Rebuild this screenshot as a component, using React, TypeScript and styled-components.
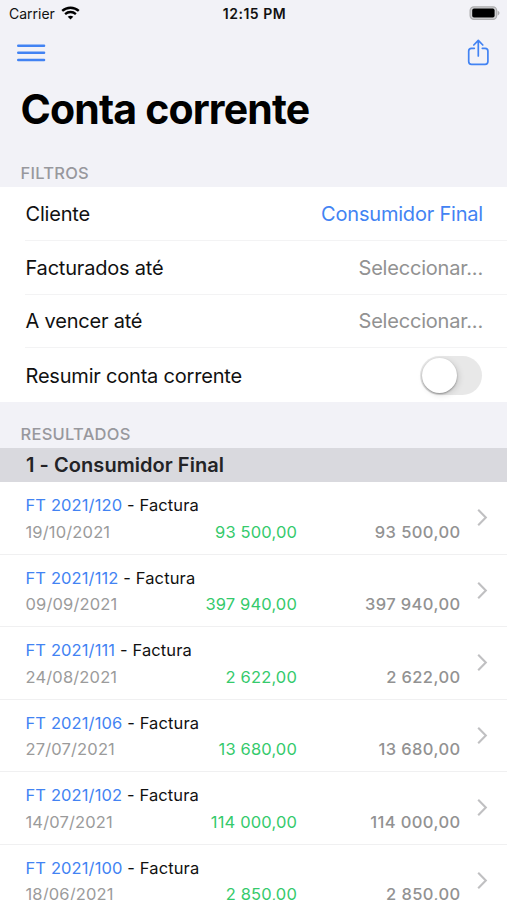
import React from 'react';
import styled, { createGlobalStyle } from 'styled-components';

const Global = createGlobalStyle`
  * { box-sizing: border-box; }
  html, body { margin: 0; padding: 0; }
  body {
    font-family: Inter, "Liberation Sans", sans-serif;
    background: #f2f2f7;
    color: #111;
    overflow: hidden;
  }
`;

const Screen = styled.div`
  width: 507px;
  height: 900px;
  overflow: hidden;
  background: #f2f2f7;
`;

const StatusBar = styled.div`
  height: 27px;
  padding: 0 7px 0 9px;
  display: grid;
  grid-template-columns: 1fr auto 1fr;
  align-items: center;
  font-size: 14px;
  line-height: 27px;
`;

const Carrier = styled.div`
  display: flex;
  align-items: center;
  gap: 6px;
`;

const WifiIcon = styled.svg`
  margin-top: -1px;
`;

const Clock = styled.div`
  font-weight: 600;
  letter-spacing: 0.5px;
`;

const Battery = styled.svg`
  justify-self: end;
  margin-top: -1px;
`;

const NavBar = styled.nav`
  height: 52px;
  padding: 0 17px;
  display: flex;
  align-items: center;
  justify-content: space-between;
`;

const IconButton = styled.button`
  display: flex;
  padding: 0;
  border: 0;
  background: none;
`;

const Title = styled.h1`
  margin: 0;
  padding-left: 20.5px;
  height: 60px;
  font-size: 41px;
  line-height: 60px;
  font-weight: 700;
  letter-spacing: -0.85px;
  color: #000;
`;

const SectionLabel = styled.h2<{ $top: number }>`
  margin: 0;
  padding: ${p => p.$top}px 20.5px 4px;
  font-size: 16.5px;
  line-height: 20px;
  font-weight: 500;
  letter-spacing: 0.25px;
  color: #98989d;
`;

const Panel = styled.section`
  background: #fff;
`;

const FilterRow = styled.div`
  height: 53.75px;
  margin-left: 25px;
  padding: 1px 24px 0 0.5px;
  display: flex;
  align-items: center;
  justify-content: space-between;
  font-size: 20px;
  letter-spacing: -0.2px;
  border-bottom: 1px solid #f3f3f4;
  &:last-child { border-bottom: 0; }
`;

const Value = styled.span<{ $selected?: boolean }>`
  color: ${p => (p.$selected ? '#4283f3' : '#929292')};
`;

const Switch = styled.button`
  width: 62px;
  height: 39px;
  margin-right: 1px;
  padding: 2px;
  border: 0;
  border-radius: 20px;
  background: #e8e8e8;
  display: flex;
`;

const Knob = styled.span`
  width: 35px;
  height: 35px;
  border-radius: 50%;
  background: #fff;
  box-shadow: 0 1px 2px rgba(0, 0, 0, 0.35), 2px 2px 6px rgba(0, 0, 0, 0.12);
`;

const GroupHeader = styled.h3`
  margin: 0;
  height: 34px;
  padding-left: 26px;
  font-size: 20px;
  line-height: 34px;
  font-weight: 600;
  letter-spacing: 0.05px;
  background: #d9d9de;
  color: #232326;
`;

const Entry = styled.article`
  height: 72.5px;
  padding: 11px 19px 0 25.5px;
  display: grid;
  grid-template-columns: 1fr 19px;
  border-bottom: 1px solid #f0f0f1;
`;

const Heading = styled.div`
  font-size: 16.5px;
  line-height: 25.5px;
  letter-spacing: 0.12px;
`;

const DocLink = styled.a`
  color: #4283f3;
`;

const Figures = styled.div`
  display: grid;
  grid-template-columns: 122px 149.5px 163.5px;
  line-height: 26px;
  font-size: 16.5px;
`;

const DateText = styled.span`
  color: #9b9b9b;
  letter-spacing: 0.15px;
`;

const Amount = styled.span<{ $paid?: boolean }>`
  text-align: right;
  font-weight: ${p => (p.$paid ? 400 : 500)};
  letter-spacing: ${p => (p.$paid ? 0.15 : 0.4)}px;
  color: ${p => (p.$paid ? '#35ca6c' : '#929292')};
`;

const Chevron = styled.svg`
  margin-top: 15px;
  justify-self: end;
`;

const entries = [
  { doc: 'FT 2021/120', date: '19/10/2021', amount: '93 500,00' },
  { doc: 'FT 2021/112', date: '09/09/2021', amount: '397 940,00' },
  { doc: 'FT 2021/111', date: '24/08/2021', amount: '2 622,00' },
  { doc: 'FT 2021/106', date: '27/07/2021', amount: '13 680,00' },
  { doc: 'FT 2021/102', date: '14/07/2021', amount: '114 000,00' },
  { doc: 'FT 2021/100', date: '18/06/2021', amount: '2 850,00' },
];

export default function App() {
  return (
    <Screen>
      <Global />
      <StatusBar>
        <Carrier>
          Carrier
          <WifiIcon width="19" height="14" viewBox="0 0 19 14" fill="none" stroke="#000">
            <path d="M1.2 4.9C5.9.6 13.1.6 17.8 4.9" strokeWidth="2.4" />
            <path d="M4.1 8.1c3.1-2.8 7.7-2.8 10.8 0" strokeWidth="2.3" />
            <path d="M9.5 13.6 6.7 10.8c1.5-1.5 4.1-1.5 5.6 0Z" fill="#000" stroke="none" />
          </WifiIcon>
        </Carrier>
        <Clock>12:15 PM</Clock>
        <Battery width="31" height="14" viewBox="0 0 31 14">
          <rect x="1.1" y=".8" width="26.6" height="12.6" rx="3.8" fill="#d0d0d2" stroke="#aeaeb0" strokeWidth="1.2" />
          <rect x="3.2" y="2.6" width="22.4" height="9" rx="1.8" fill="#000" />
          <path d="M28.7 4.8c2.4.8 2.4 3.8 0 4.6Z" fill="#aeaeb0" />
        </Battery>
      </StatusBar>
      <NavBar>
        <IconButton aria-label="Menu">
          <svg width="29" height="20" viewBox="0 0 29 20" stroke="#4283f3" strokeWidth="2.4" strokeLinecap="round">
            <path d="M1.2 2.7h25.9M1.2 9.8h25.9M1.2 17h25.9" />
          </svg>
        </IconButton>
        <IconButton aria-label="Partilhar">
          <svg width="23" height="28" viewBox="0 0 23 28" fill="none" stroke="#4283f3" strokeWidth="1.7" strokeLinecap="round" strokeLinejoin="round">
            <path d="M7.3 9.3H4.5c-1.8 0-2.8 1-2.8 2.8v10.4c0 1.8 1 2.8 2.8 2.8h13.6c1.8 0 2.8-1 2.8-2.8V12.1c0-1.8-1-2.8-2.8-2.8h-2.8" />
            <path d="M11.3 17V1.8M6.8 6 11.3 1.4 15.8 6" />
          </svg>
        </IconButton>
      </NavBar>
      <Title>Conta corrente</Title>
      <SectionLabel $top={24}>FILTROS</SectionLabel>
      <Panel>
        <FilterRow>Cliente<Value $selected>Consumidor Final</Value></FilterRow>
        <FilterRow>Facturados até<Value>Seleccionar...</Value></FilterRow>
        <FilterRow>A vencer até<Value>Seleccionar...</Value></FilterRow>
        <FilterRow>
          Resumir conta corrente
          <Switch role="switch" aria-checked={false} aria-label="Resumir conta corrente"><Knob /></Switch>
        </FilterRow>
      </Panel>
      <SectionLabel $top={22}>RESULTADOS</SectionLabel>
      <GroupHeader>1 - Consumidor Final</GroupHeader>
      <Panel>
        {entries.map(e => (
          <Entry key={e.doc}>
            <div>
              <Heading><DocLink>{e.doc}</DocLink> - Factura</Heading>
              <Figures>
                <DateText>{e.date}</DateText>
                <Amount $paid>{e.amount}</Amount>
                <Amount>{e.amount}</Amount>
              </Figures>
            </div>
            <Chevron width="12" height="19" viewBox="0 0 12 19" fill="none" stroke="#c0c0c2" strokeWidth="2.1">
              <path d="M2.2 1.8 9.8 9.5l-7.6 7.7" />
            </Chevron>
          </Entry>
        ))}
      </Panel>
    </Screen>
  );
}
